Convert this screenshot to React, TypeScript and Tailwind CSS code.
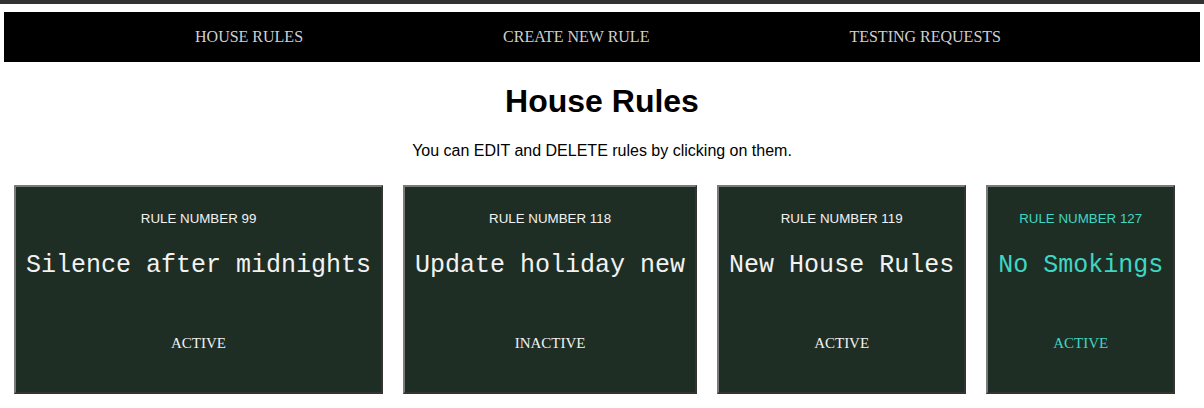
import React from "react";

const rules = [
  { n: 99, title: "Silence after midnights", status: "ACTIVE", teal: false },
  { n: 118, title: "Update holiday new", status: "INACTIVE", teal: false },
  { n: 119, title: "New House Rules", status: "ACTIVE", teal: false },
  { n: 127, title: "No Smokings", status: "ACTIVE", teal: true },
];

export default function App() {
  return (
    <div className="w-[1204px] h-[408px] bg-white overflow-hidden border-t-4 border-[#333333]">
      <nav className="mx-[4px] mt-[8px] h-[50px] bg-black flex items-center justify-center gap-[200px] pr-[8px] text-[16px] text-[#d0d0d0] [font-family:'Liberation_Serif',serif]">
        <span>HOUSE RULES</span>
        <span>CREATE NEW RULE</span>
        <span>TESTING REQUESTS</span>
      </nav>
      <h1 className="mt-[21px] text-center text-[32px] leading-[37px] font-bold text-black [font-family:'Liberation_Sans',sans-serif]">
        House Rules
      </h1>
      <p className="mt-[22px] text-center text-[16px] leading-[18px] text-black [font-family:'Liberation_Sans',sans-serif]">
        You can EDIT and DELETE rules by clicking on them.
      </p>
      <div className="mt-[25px] pl-[14px] flex gap-[20px]">
        {rules.map((r) => (
          <div
            key={r.n}
            className={`h-[209px] bg-[#1f2e25] border-2 border-t-[#7a7a7a] border-l-[#7a7a7a] border-b-[#333333] border-r-[#333333] px-[10px] pt-[24px] flex flex-col items-center ${
              r.teal ? "text-[#3fd6c2]" : "text-[#f2f2f2]"
            }`}
          >
            <div className="text-[13.33px] leading-[15px] [font-family:'Liberation_Sans',sans-serif]">
              RULE NUMBER {r.n}
            </div>
            <div className="mt-[25px] text-[25px] leading-[30px] whitespace-nowrap [font-family:'Liberation_Mono',monospace]">
              {r.title}
            </div>
            <div className="mt-[53px] text-[15px] leading-[18px] [font-family:'Liberation_Serif',serif]">
              {r.status}
            </div>
          </div>
        ))}
      </div>
    </div>
  );
}
